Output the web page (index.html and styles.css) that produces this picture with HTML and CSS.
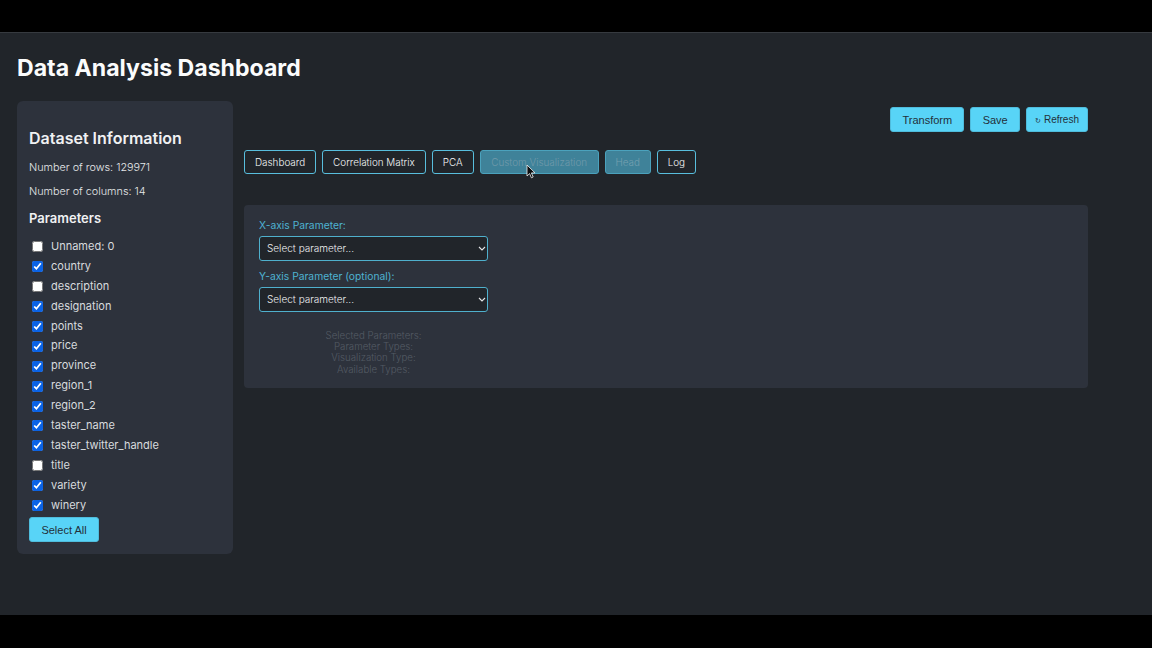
FILE: index.html
```html
<!DOCTYPE html>
<html lang="en">
<head>
    <meta charset="UTF-8">
    <meta name="viewport" content="width=device-width, initial-scale=1.0">
    <title>Data Analysis Dashboard</title>
    <link rel="stylesheet" href="styles.css">
</head>
<body>
    <div class="app">
        <h1>Data Analysis Dashboard</h1>
        <div class="layout">
            <aside class="sidebar">
                <h2>Dataset Information</h2>
                <p>Number of rows: 129971</p>
                <p>Number of columns: 14</p>
                <h3>Parameters</h3>
                <ul class="params">
                    <li><label><input type="checkbox"> Unnamed: 0</label></li>
                    <li><label><input type="checkbox" checked> country</label></li>
                    <li><label><input type="checkbox"> description</label></li>
                    <li><label><input type="checkbox" checked> designation</label></li>
                    <li><label><input type="checkbox" checked> points</label></li>
                    <li><label><input type="checkbox" checked> price</label></li>
                    <li><label><input type="checkbox" checked> province</label></li>
                    <li><label><input type="checkbox" checked> region_1</label></li>
                    <li><label><input type="checkbox" checked> region_2</label></li>
                    <li><label><input type="checkbox" checked> taster_name</label></li>
                    <li><label><input type="checkbox" checked> taster_twitter_handle</label></li>
                    <li><label><input type="checkbox"> title</label></li>
                    <li><label><input type="checkbox" checked> variety</label></li>
                    <li><label><input type="checkbox" checked> winery</label></li>
                </ul>
                <button class="btn-solid select-all">Select All</button>
            </aside>
            <main class="main">
                <div class="actions">
                    <button class="btn-solid">Transform</button>
                    <button class="btn-solid btn-save">Save</button>
                    <button class="btn-solid btn-refresh"><span class="refresh-icon">↻</span> Refresh</button>
                </div>
                <nav class="tabs">
                    <button class="tab">Dashboard</button>
                    <button class="tab">Correlation Matrix</button>
                    <button class="tab">PCA</button>
                    <button class="tab tab-fading tab-custom">Custom Visualization</button>
                    <button class="tab tab-fading tab-head">Head</button>
                    <button class="tab">Log</button>
                </nav>
                <section class="panel">
                    <label class="field-label" for="xParam">X-axis Parameter:</label>
                    <div class="select-wrap">
                        <select id="xParam"><option>Select parameter...</option></select>
                        <svg class="chevron" width="8" height="5" viewBox="0 0 8 5"><path d="M1 1l3 3 3-3" fill="none" stroke="#e4e6e8" stroke-width="1.1"/></svg>
                    </div>
                    <label class="field-label" for="yParam">Y-axis Parameter (optional):</label>
                    <div class="select-wrap">
                        <select id="yParam"><option>Select parameter...</option></select>
                        <svg class="chevron" width="8" height="5" viewBox="0 0 8 5"><path d="M1 1l3 3 3-3" fill="none" stroke="#e4e6e8" stroke-width="1.1"/></svg>
                    </div>
                    <div class="debug">
                        <div>Selected Parameters:</div>
                        <div>Parameter Types:</div>
                        <div>Visualization Type:</div>
                        <div>Available Types:</div>
                    </div>
                </section>
            </main>
        </div>
    </div>
    <svg class="cursor" width="10" height="15" viewBox="0 0 10 15">
        <path d="M1 1v11l2.6-2.4 1.8 4.2 1.8-.8-1.8-4.1H9z" fill="#0b0c0e" stroke="#f2f2f2" stroke-width=".8"/>
    </svg>
</body>
</html>
```

FILE: styles.css
```css
* {
    box-sizing: border-box;
}
html, body {
    height: 100%;
}
body {
    margin: 0;
    background: #000;
    font-family: Inter, "Liberation Sans", sans-serif;
    color: #e8eaec;
    overflow: hidden;
}
.app {
    margin-top: 32px;
    height: 583px;
    padding: 21px 17px 0;
    background: #21252a;
    border-top: 1px solid #363a3f;
}
h1 {
    margin: 0 0 18px;
    font-size: 23.1px;
    line-height: 29px;
    font-weight: 700;
    color: #fbfcfc;
}
.layout {
    display: flex;
    gap: 11px;
    align-items: flex-start;
}
.sidebar {
    width: 216px;
    height: 453px;
    padding: 28px 12px 0;
    background: #2d323c;
    border-radius: 6px;
}
.sidebar h2 {
    margin: 0 0 13px;
    font-size: 16px;
    line-height: 19px;
    font-weight: 600;
    color: #f0f1f3;
}
.sidebar p {
    margin: 0 0 10px;
    font-size: 10.8px;
    line-height: 14px;
    font-weight: 300;
    color: #e6e8ea;
}
.sidebar h3 {
    margin: 11px 0 11px;
    font-size: 13px;
    line-height: 16px;
    font-weight: 600;
    color: #f0f1f3;
}
.params {
    list-style: none;
    margin: 0;
    padding: 0;
}
.params li {
    height: 19.9px;
    font-size: 11px;
    line-height: 19.9px;
    color: #d8dbde;
}
.params label {
    display: flex;
    align-items: center;
    gap: 8px;
}
.params input {
    width: 11px;
    height: 11px;
    margin: 0 0 0 3px;
    accent-color: #0b63e5;
}
.btn-solid {
    height: 25px;
    padding: 0 11px;
    background: #58d4f7;
    border: 1px solid #4fbcdc;
    border-radius: 3px;
    font-family: "Liberation Sans", sans-serif;
    font-size: 11px;
    color: #23303a;
}
.select-all {
    margin-top: 2px;
    width: 70px;
    padding: 0;
}
.main {
    width: 844px;
    padding-top: 6px;
}
.actions {
    display: flex;
    justify-content: flex-end;
    gap: 6px;
    margin-bottom: 18px;
}
.btn-save {
    width: 50px;
    padding: 0;
}
.btn-refresh {
    padding: 0 8px;
    font-size: 10px;
}
.refresh-icon {
    font-size: 7px;
}
.tabs {
    display: flex;
    gap: 6px;
    margin-bottom: 31px;
}
.tab {
    height: 24px;
    padding: 0 10px;
    background: #21252a;
    border: 1px solid #58bedd;
    border-radius: 3px;
    font-family: Inter, sans-serif;
    font-size: 9.9px;
    font-weight: 300;
    color: #f4f5f6;
}
.tab-fading {
    background: #3f8299;
    border-color: #4ba2bd;
    color: #6f99aa;
}
.tab-custom {
    width: 119px;
    padding: 0;
}
.tab-head {
    width: 46px;
    padding: 0;
    color: #75a0b0;
}
.panel {
    height: 183px;
    padding: 14px 15px 0;
    background: #2d323c;
    border-radius: 4px;
}
.field-label {
    display: block;
    margin-bottom: 4px;
    font-size: 10.3px;
    line-height: 13px;
    color: #4db3d2;
}
.select-wrap {
    position: relative;
    width: 229px;
    height: 25px;
    margin-bottom: 9px;
}
.select-wrap select {
    appearance: none;
    width: 100%;
    height: 100%;
    padding: 0 7px 1px;
    background: #21252a;
    border: 1px solid #4fb0cd;
    border-radius: 3px;
    font-family: Inter, sans-serif;
    font-size: 10px;
    font-weight: 300;
    color: #f0f1f2;
}
.chevron {
    position: absolute;
    top: 10px;
    right: 2px;
}
.debug {
    width: 229px;
    margin-top: 18px;
    text-align: center;
    font-size: 9.7px;
    line-height: 11.2px;
    font-weight: 300;
    color: #545b64;
}
.cursor {
    position: absolute;
    left: 526px;
    top: 164px;
}
```
